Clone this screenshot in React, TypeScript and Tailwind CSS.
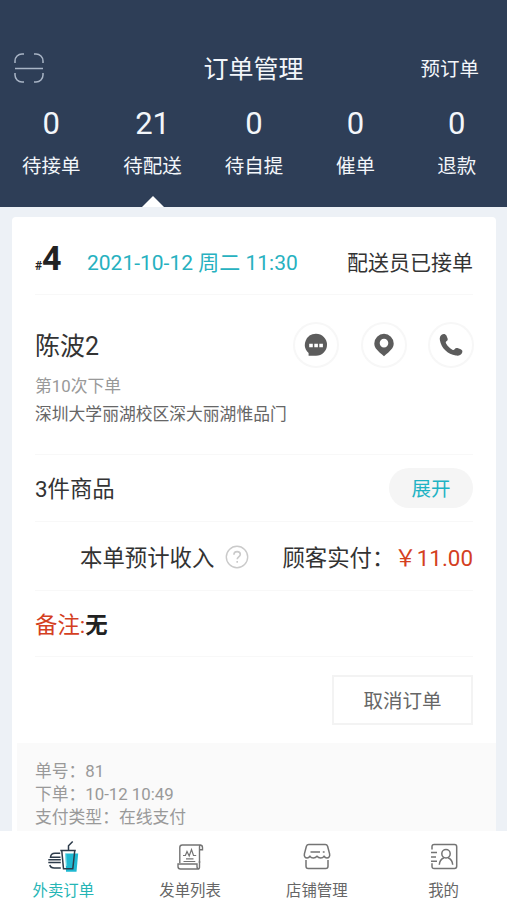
import { clsx } from 'clsx'
import type { ReactNode } from 'react'

const tabs = [
  { label: '待接单', count: 0 },
  { label: '待配送', count: 21 },
  { label: '待自提', count: 0 },
  { label: '催单', count: 0 },
  { label: '退款', count: 0 },
]

const details = ['单号：81', '下单：10-12 10:49', '支付类型：在线支付']

const ScanIcon = () => (
  <svg className="h-[30px] w-[30px]" viewBox="0 0 30 30" fill="none" stroke="#a9b5c6" strokeWidth="1.5">
    <path d="M1 10V8a7 7 0 0 1 7-7h2M20 1h2a7 7 0 0 1 7 7v2M29 20v2a7 7 0 0 1-7 7h-2M10 29H8a7 7 0 0 1-7-7v-2M1 15.5h28" />
  </svg>
)

const ChatIcon = () => (
  <svg className="h-6 w-6" viewBox="0 0 24 24" fill="#5c5c5c">
    <path d="M12 .8a11 11 0 1 1 0 22H4.600V20A11 11 0 0 1 12 .8z" />
    <path d="M5.200 10.800h3.600v3.400H5.200zM10.300 10.800h3.600v3.400h-3.600zM15.300 10.800h3.600v3.400h-3.600z" fill="#fff" />
  </svg>
)

const PinIcon = () => (
  <svg className="h-6 w-6" viewBox="0 0 24 24" fill="#5c5c5c">
    <path
      fillRule="evenodd"
      d="M12 .8a9.700 9.700 0 0 1 9.700 9.700c0 4.600-3.400 7.500-9.700 12.700C5.700 18 2.300 15.100 2.300 10.500A9.700 9.700 0 0 1 12 .8zm0 5a4.300 4.300 0 1 0 0 8.600 4.300 4.300 0 0 0 0-8.600z"
    />
  </svg>
)

const PhoneIcon = () => (
  <svg className="h-6 w-6" viewBox="0 0 24 24" fill="#5c5c5c">
    <path d="M3 1.500C4.700.5 6.600 1 7.400 2.600l1.200 2.800c.4 1.300-.1 2.200-1.200 2.900-.7.600-.8 1.200-.3 2.200 1.600 2.700 3.600 4.700 6.300 6.200 1 .5 1.600.3 2.200-.5.8-1.100 1.700-1.500 2.900-1.100l3.200 1.100c1.700.6 2.200 2.300 1.200 4-1.200 2-3.200 2.800-6 2.300C8.700 21.500 2.200 14.900.9 7.300.4 4.600 1.200 2.600 3 1.500z" />
  </svg>
)

const HelpIcon = () => (
  <svg className="h-6 w-6" viewBox="0 0 24 24" fill="none" stroke="#cacaca" strokeWidth="1.4">
    <circle cx="12" cy="12" r="10.700" />
    <path d="M8.900 9.800c0-2 1.300-3.200 3.200-3.200s3.200 1.200 3.200 2.900c0 2.400-3.100 2.500-3.100 4.800M12.200 16v1.700" strokeWidth="1.600" />
  </svg>
)

const TakeoutIcon = () => (
  <svg className="h-8 w-8" viewBox="0 0 32 32" fill="none" stroke="#2c3b4a" strokeWidth="1.500">
    <path d="M18.500 12.500h12.700l-1.700 18.300H19z" fill="#1fb9d2" stroke="none" />
    <path d="M13.300 9.500h15.500M14.800 10l1.700 17.800h9.300L27.700 10M21.500 9V4.800l4.200-4.300" />
    <path d="M13.200 12.200H8c-3 0-4.300 1.300-4.500 4h10M1.300 18.800h12.500M1.300 21.500h12.500M2.800 24c.5 2.200 2 3 4.500 3h6.500" />
    <path d="M18.700 12.500l1 12.500" stroke="#6bd8e6" strokeWidth="1" />
  </svg>
)

const ListIcon = () => (
  <svg className="h-8 w-8" viewBox="0 0 32 32" fill="none" stroke="#747474" strokeWidth="1.400">
    <path d="M5.800 22V6.500c0-1.600.9-2.500 2.500-2.500h17.500c1.800 0 2.700 1 2.700 2.500v2.300h-3M25.500 22V6.500c0-1.500.3-2.500 1-2.500" />
    <path d="M4 23h19v2.500c0 1.700.8 2.500 2 2.500H6.500C4.800 28 4 27 4 25.500zM25.500 20v6.500c0 1-.5 1.500-1.500 1.500" />
    <path d="M9 14.500h2.400l1.600-4 2.200 4.500 2.300-6.500 2 6h2.700M12 17.800h7.500M9.500 20.500h11.800" strokeWidth="1.200" />
  </svg>
)

const ShopIcon = () => (
  <svg className="h-8 w-8" viewBox="0 0 32 32" fill="none" stroke="#747474" strokeWidth="1.500">
    <path d="M7.800 3.500h16.400c1.300 0 2 .6 2.400 1.800l2 7.500c.5 2.500-.7 4.200-2.700 4.200-1.300 0-2.200-.7-2.900-1.700-.8 1.200-1.900 1.700-3.300 1.700s-2.700-.5-3.700-1.700c-1 1.200-2.300 1.700-3.700 1.700s-2.500-.5-3.300-1.700C8.300 16.300 7.400 17 6.100 17c-2 0-3.200-1.700-2.700-4.200l2-7.500c.4-1.200 1.100-1.800 2.400-1.800z" />
    <path d="M5 19v6.200c0 1.500.7 2.300 2.300 2.300h17.400c1.600 0 2.300-.8 2.300-2.300V19M9.500 11h9.500M21.800 11h1.800" />
  </svg>
)

const ProfileIcon = () => (
  <svg className="h-8 w-8" viewBox="0 0 32 32" fill="none" stroke="#747474" strokeWidth="1.500">
    <path d="M4 8.500V5.700c0-1.500.7-2.200 2.200-2.200h20.300c1.500 0 2.200.7 2.200 2.200v19.600c0 1.500-.7 2.200-2.200 2.200H6.200c-1.500 0-2.200-.7-2.200-2.200v-3" />
    <path d="M3 11.500h6M3 16h5M3 20.300h6" />
    <circle cx="18" cy="12.700" r="4.200" />
    <path d="M11.300 23.800c.2-4.300 2.300-6 4.700-7.100M20 16.700c2.500 1.100 4.500 2.800 4.700 7.100" />
  </svg>
)

const navItems = [
  { label: '外卖订单', icon: <TakeoutIcon />, active: true },
  { label: '发单列表', icon: <ListIcon /> },
  { label: '店铺管理', icon: <ShopIcon /> },
  { label: '我的', icon: <ProfileIcon /> },
]

const RoundButton = ({ children }: { children: ReactNode }) => (
  <button className="flex h-[46px] w-[46px] items-center justify-center rounded-full border-2 border-[#f7f7f7]">
    {children}
  </button>
)

const Header = () => (
  <header className="h-[207px] shrink-0 bg-[#2e3e57] pt-[52px] text-[#f3f6fa]">
    <div className="grid h-8 grid-cols-3 items-center pr-7 pl-[14px]">
      <ScanIcon />
      <h1 className="pt-1 pl-[14px] text-center text-[25px] leading-7 whitespace-nowrap">订单管理</h1>
      <button className="pt-1 text-right text-[19.5px] leading-7">预订单</button>
    </div>
    <nav className="grid h-[123px] grid-cols-5 pt-[22px]">
      {tabs.map((tab) => (
        <div key={tab.label} className="flex flex-col items-center">
          <span className="pl-px text-[31px] leading-9">{tab.count}</span>
          <span className="mt-[11px] pl-px text-[19.5px] leading-7">{tab.label}</span>
          {tab.label === '待配送' && (
            <svg className="mt-auto ml-px h-[11px] w-[22px]" viewBox="0 0 22 11" fill="#fff">
              <path d="M11 0l11 11H0z" />
            </svg>
          )}
        </div>
      ))}
    </nav>
  </header>
)

const OrderCard = () => (
  <article className="flex flex-1 flex-col rounded-t-[4px] bg-white text-[#333]">
    <div className="px-[23px]">
      <div className="flex h-[78px] items-center border-b border-[#f8f8f8] pt-[13px]">
        <div className="flex w-[52px] items-baseline pb-2 font-bold text-[#222]">
          <span className="text-[12px]">#</span>
          <span className="text-[34px] leading-10">4</span>
        </div>
        <span className="pt-px text-[21px] leading-8 whitespace-nowrap text-[#27b1c0]">2021-10-12 周二 11:30</span>
        <span className="ml-auto pt-px text-[21px] leading-8">配送员已接单</span>
      </div>

      <div className="h-[160px] border-b border-[#f8f8f8] pt-[27px]">
        <div className="flex h-[46px] items-center justify-between">
          <h2 className="pt-1 text-[25px] leading-9">陈波2</h2>
          <div className="-mr-px flex gap-[21.5px]">
            <RoundButton><ChatIcon /></RoundButton>
            <RoundButton><PinIcon /></RoundButton>
            <RoundButton><PhoneIcon /></RoundButton>
          </div>
        </div>
        <p className="mt-1 text-[16.8px] leading-7 text-[#999]">第10次下单</p>
        <p className="text-[16.8px] leading-7 text-[#666]">深圳大学丽湖校区深大丽湖惟品门</p>
      </div>

      <div className="flex h-[67px] items-center justify-between border-b border-[#f8f8f8]">
        <span className="pt-0.5 text-[22.4px] leading-8">3件商品</span>
        <button className="h-10 w-[84px] rounded-full bg-[#f5f5f5] pt-[3px] text-[19.5px] leading-[37px] text-[#1fb3c4]">展开</button>
      </div>

      <div className="flex h-[69px] items-center justify-end border-b border-[#f8f8f8] text-[22.4px] leading-8 whitespace-nowrap">
        <span className="pt-[3px]">本单预计收入</span>
        <span className="mr-[33px] ml-[11px] pt-px"><HelpIcon /></span>
        <span className="pt-[3px]">顾客实付：</span>
        <span className="pt-[3px] text-[#d4401f]">￥11.00</span>
      </div>

      <div className="flex h-[66px] items-center border-b border-[#f8f8f8] pt-[3px] text-[22.4px] leading-8">
        <span className="text-[#d4401f]">备注:</span>
        <span className="font-bold text-[#222]">无</span>
      </div>

      <div className="flex h-[86px] items-center justify-end">
        <button className="h-[50px] w-[141px] border-2 border-[#f3f3f3] pt-[3px] text-[19.5px] leading-[43px] text-[#666]">取消订单</button>
      </div>
    </div>

    <div className="ml-[5px] flex-1 bg-[#fafafa] pt-[17px] pl-[18px] text-[16.8px] leading-[23px] text-[#999]">
      {details.map((line) => (
        <p key={line}>{line}</p>
      ))}
    </div>
  </article>
)

const BottomNav = () => (
  <nav className="grid h-[69px] shrink-0 grid-cols-4 bg-white pt-[10px]">
    {navItems.map((item) => (
      <div key={item.label} className="flex flex-col items-center">
        {item.icon}
        <span className={clsx('mt-1.5 text-[15.4px] leading-6', item.active ? 'text-[#25b5b5]' : 'text-[#666]')}>
          {item.label}
        </span>
      </div>
    ))}
  </nav>
)

export default function App() {
  return (
    <div className="flex h-[900px] w-[507px] flex-col overflow-hidden bg-[#edf1f6] font-[Roboto,'Noto_Sans_CJK_SC',sans-serif]">
      <Header />
      <main className="flex flex-1 flex-col pt-[10px] pr-[11px] pl-3">
        <OrderCard />
      </main>
      <BottomNav />
    </div>
  )
}
